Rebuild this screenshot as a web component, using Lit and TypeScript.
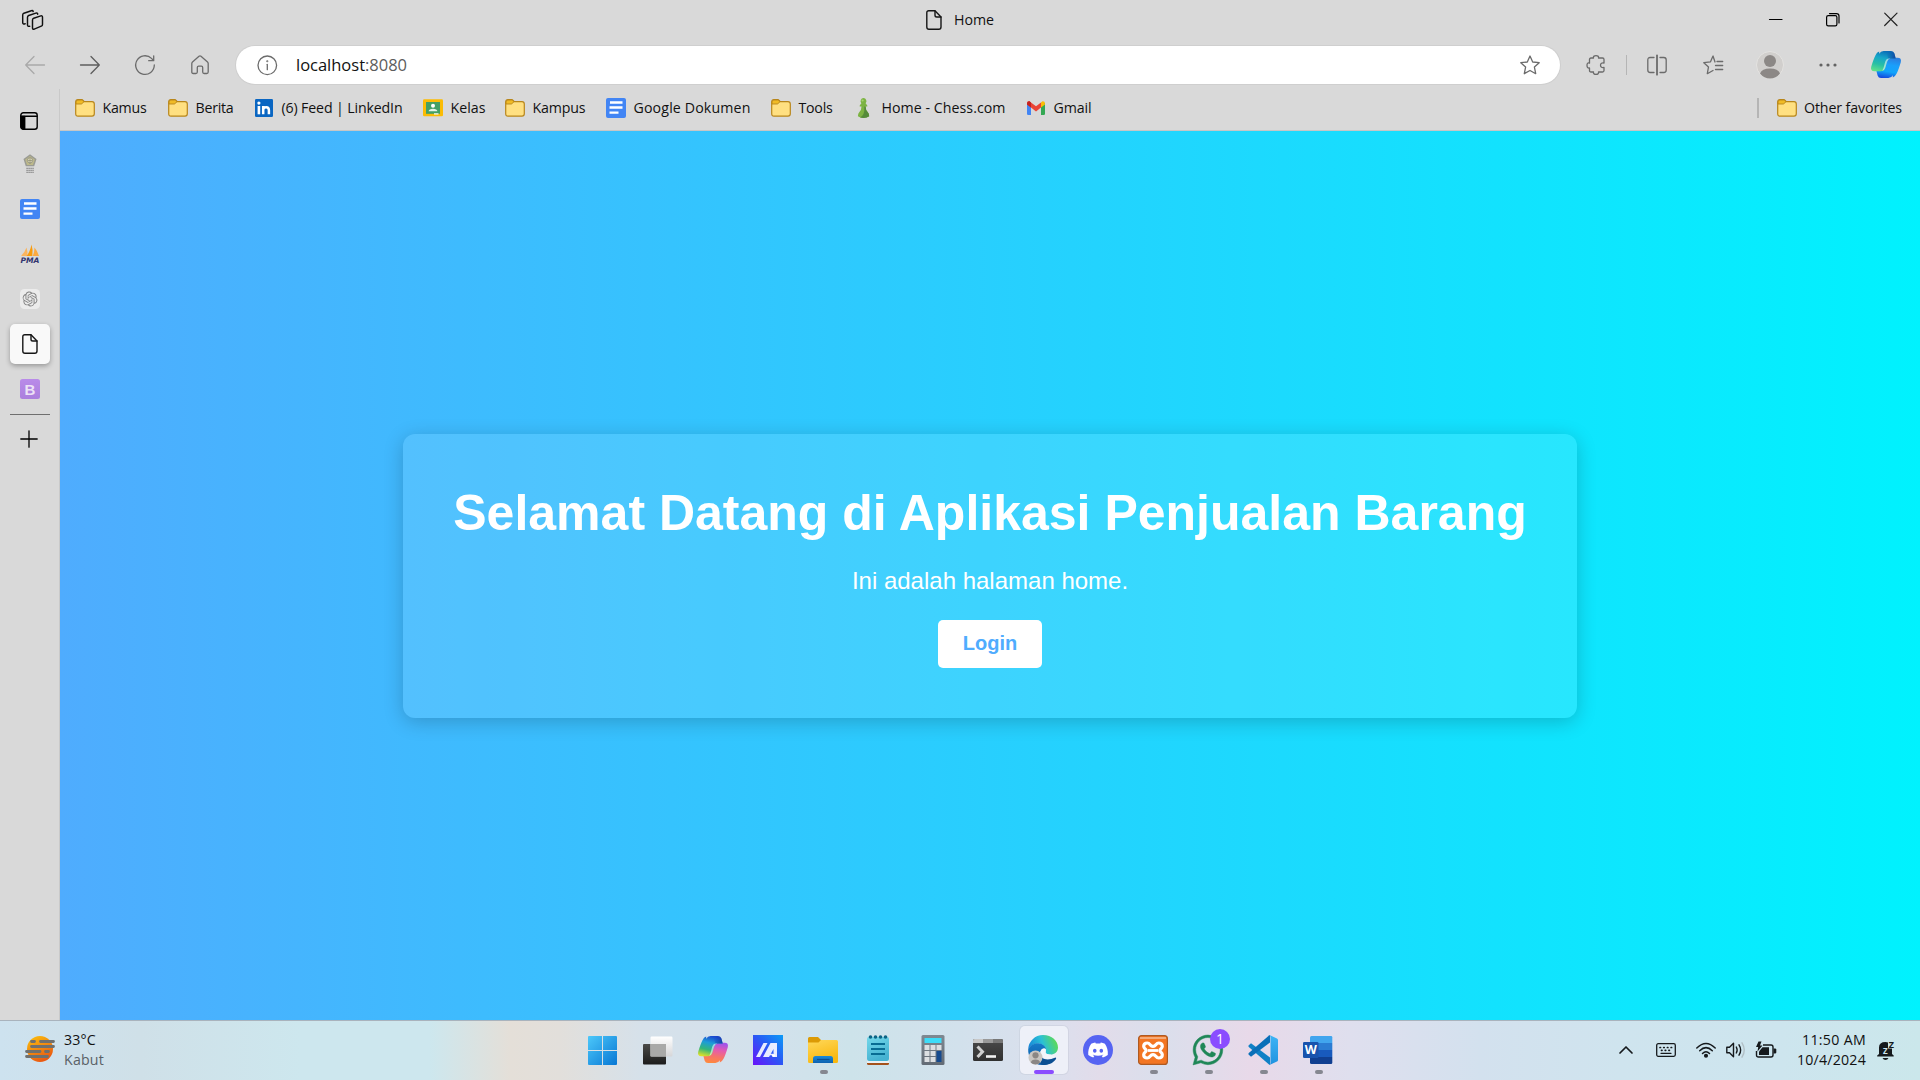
import { LitElement, html, css, svg } from "lit";
import { customElement, property } from "lit/decorators.js";

/** A label whose tracking is adjusted so that it fills the given width. */
@customElement("fit-label")
class FitLabel extends LitElement {
  @property() text = "";
  @property({ type: Number }) w = 0;
  static styles = css`
    :host { display: block; white-space: pre; }
    .t { display: inline-block; }
  `;
  updated() {
    const el = this.renderRoot.querySelector(".t") as HTMLElement;
    if (!this.w || !el) return;
    el.style.letterSpacing = "0";
    const natural = el.getBoundingClientRect().width;
    el.style.letterSpacing = (this.w - natural) / this.text.length + "px";
    this.style.width = this.w + "px";
  }
  render() { return html`<span class="t">${this.text}</span>`; }
}

const box = (w: number, h: number, body: unknown) =>
  html`<svg width=${w} height=${h} viewBox="0 0 ${w} ${h}" fill="none">${body}</svg>`;
const line = (w: number, h: number, body: unknown, color = "#6b6b6b", sw = 1.3) =>
  box(w, h, svg`<g stroke=${color} stroke-width=${sw} stroke-linecap="round" stroke-linejoin="round">${body}</g>`);

const folder = box(20, 20, svg`
  <path d="M.7 5.5V4Q.7 1.7 3 1.7H6.6Q7.6 1.7 8.2 2.5L9.2 3.6H17Q19.3 3.6 19.3 6V15.8Q19.3 18.2 17 18.2H3Q.7 18.2 .7 15.8Z" fill="#ffe081" stroke="#b8861b" stroke-width="1.2"/>
  <path d="M1 6V4Q1 2 3 2H6.6Q7.4 2 8 2.8L8.8 3.8L7.6 5.2Q7 6 6 6Z" fill="#f0bb26" stroke="#b8861b" stroke-width=".9"/>`);
const docs = box(20, 20, svg`
  <rect width="20" height="20" rx="2" fill="#4285f4"/>
  <path d="M4 4.5H16.5M3.5 9.5H16.5M3.5 14.6H12.5" stroke="#fff" stroke-width="2.3"/>`);
const linkedin = box(20, 20, svg`
  <rect x="1" y="1" width="18" height="18" rx="1.2" fill="#0a66c2"/>
  <rect x="3.6" y="8" width="2.6" height="8.3" fill="#fff"/><circle cx="4.9" cy="5.1" r="1.6" fill="#fff"/>
  <path d="M9.2 16.3V8M9.2 11.5Q9.6 9.2 12.2 9.2Q14.9 9.2 14.9 12.2V16.3" stroke="#fff" stroke-width="2.5"/>`);
const classroom = box(20, 20, svg`
  <rect y="1.3" width="20" height="17" rx="1.3" fill="#fbbc04"/>
  <rect x="3" y="4" width="14" height="11.8" fill="#43a066"/>
  <circle cx="10" cy="7.8" r="2" fill="#fff"/><path d="M5.6 13.3Q6 10.8 10 10.8T14.4 13.3Z" fill="#e4f3e8"/>
  <rect x="11" y="15.2" width="4.5" height="1.4" fill="#e9f5ec"/>`);
const chess = box(20, 20, svg`
  <path d="M9.500 0A3.100 3.100 0 0 1 11.600 5.200L13.300 7.600V8.600H11.600Q11.600 12 13.600 14Q15.200 15.500 15.200 18.200Q13 20 9.500 20T3.900 18.200Q3.900 15.500 5.400 14Q7.500 12 7.500 8.600H5.700V7.600L7.400 5.200A3.100 3.100 0 0 1 9.500 0Z" fill="#7cb342"/>
  <path d="M11.600 8.600Q11.600 12 13.600 14Q15.200 15.500 15.200 18.200Q13 20 9.500 20L6 19.500Q11 17.500 10.300 8.600Z" fill="#558b3a"/>
  <circle cx="8.600" cy="2.500" r="1.100" fill="#a6d36f"/>`);
const gmail = box(20, 20, svg`
  <path d="M1 5H5V17H2.300Q1 17 1 15.700Z" fill="#4285f4"/><path d="M15 5H19V15.700Q19 17 17.700 17H15Z" fill="#34a853"/>
  <path d="M1 5.500Q1 3 3.200 3L5 4.400L10 8.300L15 4.400V9.500L10 13.400L5 9.500L1 6.500Z" fill="#ea4335"/>
  <path d="M15 4.400L16.500 3.200Q19 3 19 5.500V6.500L15 9.500Z" fill="#fbbc04"/><path d="M1 5.500Q1 3 3.500 3.200L5 4.400V9.500L1 6.500Z" fill="#c5221f"/>`);

const fileIcon = line(16, 20, svg`<path d="M2.800 .8H9L15 7V17Q15 19.200 12.800 19.200H3Q.8 19.200 .8 17V2.800Q.8 .8 2.800 .8Z"/><path d="M9 1V5.200Q9 7 10.800 7H15"/>`, "#161616", 1.4);
const copilotShape = "M8.200 2.800Q9.600 0 12.600 0H20Q22.600 0 23.400 2.600L24.700 7.500H20.500Q17 7.500 16 11L14.200 17Q13.200 20.200 9.500 20.200H3.400Q-.8 20.200 .2 15.800Q2.500 8 4.500 4.200Q5.700 1.500 8.200 .6Z";
const copilot = (id: string, a: string[], b: string[]) => box(30, 28, svg`
  <defs>
    <linearGradient id="${id}a" x1=".55" y1="0" x2=".25" y2="1">${a.map((c, i) => svg`<stop offset=${i / (a.length - 1)} stop-color=${c} />`)}</linearGradient>
    <linearGradient id="${id}b" x1=".5" y1="1" x2=".7" y2="0">${b.map((c, i) => svg`<stop offset=${i / (b.length - 1)} stop-color=${c} />`)}</linearGradient>
    <linearGradient id="${id}c" x1="0" y1="0" x2="1" y2=".4"><stop offset="0" stop-color=${a[0]} stop-opacity="0"/><stop offset="1" stop-color="#123a9c" stop-opacity=".75"/></linearGradient>
  </defs>
  <path d=${copilotShape} fill="url(#${id}b)" transform="rotate(180 15 13.500)"/>
  <path d=${copilotShape} fill="url(#${id}a)"/>
  <path d="M15 0H20Q22.600 0 23.400 2.600L24.700 7.500H20.500Q18.500 7.500 17.500 8.500Z" fill="url(#${id}c)"/>
  <path d="M19.500 7.600Q17 8 16 11L14.200 17Q13.200 19.500 11.200 19.800L12.500 17L14.200 10.800Q15.200 7.600 18 7.500Z" fill="#fff" opacity=".55"/>`);

const edge = box(30, 30, svg`
  <defs>
    <linearGradient id="e1" x1="0" y1=".6" x2="1" y2=".35"><stop offset="0" stop-color="#1684d8"/><stop offset=".5" stop-color="#2ac0d6"/><stop offset="1" stop-color="#62dc4c"/></linearGradient>
    <linearGradient id="e2" x1="0" y1="0" x2="0" y2="1"><stop offset="0" stop-color="#167bc9"/><stop offset="1" stop-color="#0c59a4"/></linearGradient>
  </defs>
  <path d="M.2 14A15 14.500 0 0 1 15 0C24 0 30 6 30 12.500C30 17 26.500 19.500 22.500 19.500C19 19.500 17 18.300 17.700 16.500C18.600 14.500 17 10 11.500 8.500C6 8 2 11 .2 14Z" fill="url(#e1)"/>
  <path d="M.2 14C2 10.500 6 8 10.500 8.300C15 8.700 18 12 18 14.500C16 12 12 14 12 18.500C12 24 18 27 26 24.500C22 29.500 17 30 14 30C6 30-.5 22 .2 14Z" fill="url(#e2)"/>
  <path d="M12 18C12 24 19 26.500 27.500 22.500Q28.500 22.500 28 24C25 28.500 20 30 15 30C10 28 9 21 12 18Z" fill="#0b4f92"/>
  <path d="M17.700 14C14.500 12.500 12.300 15 12.500 18.500C13 22 17 24.300 22 23.500C25 23 27 22 27.500 21.500Q23 20.500 22.500 19.500C19 19.500 17 18.300 17.700 16.500Z" fill="#f3f5fb"/>
  <circle cx="7.500" cy="22.500" r="7" fill="#c9c6c2"/><circle cx="7.500" cy="20.300" r="3.100" fill="#8b8784"/><path d="M2.800 27.500Q3.500 24.500 7.500 24.500T12.200 27.500Q10.500 29.500 7.500 29.500T2.800 27.500Z" fill="#8b8784"/>`);

const discordPath = "M20.317 4.3698a19.7913 19.7913 0 00-4.8851-1.5152.0741.0741 0 00-.0785.0371c-.211.3753-.4447.8648-.6083 1.2495-1.8447-.2762-3.68-.2762-5.4868 0-.1636-.3933-.4058-.8742-.6177-1.2495a.077.077 0 00-.0785-.037 19.7363 19.7363 0 00-4.8852 1.515.0699.0699 0 00-.0321.0277C.5334 9.0458-.319 13.5799.0992 18.0578a.0824.0824 0 00.0312.0561c2.0528 1.5076 4.0413 2.4228 5.9929 3.0294a.0777.0777 0 00.0842-.0276c.4616-.6304.8731-1.2952 1.226-1.9942a.076.076 0 00-.0416-.1057c-.6528-.2476-1.2743-.5495-1.8722-.8923a.077.077 0 01-.0076-.1277c.1258-.0943.2517-.1923.3718-.2914a.0743.0743 0 01.0776-.0105c3.9278 1.7933 8.18 1.7933 12.0614 0a.0739.0739 0 01.0785.0095c.1202.099.246.1981.3728.2924a.077.077 0 01-.0066.1276 12.2986 12.2986 0 01-1.873.8914.0766.0766 0 00-.0407.1067c.3604.698.7719 1.3628 1.225 1.9932a.076.076 0 00.0842.0286c1.961-.6067 3.9495-1.5219 6.0023-3.0294a.077.077 0 00.0313-.0552c.5004-5.177-.8382-9.6739-3.5485-13.6604a.061.061 0 00-.0312-.0286zM8.02 15.3312c-1.1825 0-2.1569-1.0857-2.1569-2.419 0-1.3332.9555-2.4189 2.157-2.4189 1.2108 0 2.1757 1.0952 2.1568 2.419 0 1.3332-.9555 2.4189-2.1569 2.4189zm7.9748 0c-1.1825 0-2.1569-1.0857-2.1569-2.419 0-1.3332.9554-2.4189 2.1569-2.4189 1.2108 0 2.1757 1.0952 2.1568 2.419 0 1.3332-.946 2.4189-2.1568 2.4189Z";
const whatsappPath = "M13.601 2.326A7.854 7.854 0 0 0 7.994 0C3.627 0 .068 3.558.064 7.926c0 1.399.366 2.76 1.057 3.965L0 16l4.204-1.102a7.933 7.933 0 0 0 3.79.965h.004c4.368 0 7.926-3.558 7.93-7.93A7.898 7.898 0 0 0 13.6 2.326zM7.994 14.521a6.573 6.573 0 0 1-3.356-.92l-.24-.144-2.494.654.666-2.433-.156-.251a6.56 6.56 0 0 1-1.007-3.505c0-3.626 2.957-6.584 6.591-6.584a6.56 6.56 0 0 1 4.66 1.931 6.557 6.557 0 0 1 1.928 4.66c-.004 3.639-2.961 6.592-6.592 6.592zm3.615-4.934c-.197-.099-1.17-.578-1.353-.646-.182-.065-.315-.099-.445.099-.133.197-.513.646-.627.775-.114.133-.232.148-.43.05-.197-.1-.836-.308-1.592-.985-.59-.525-.985-1.175-1.103-1.372-.114-.198-.011-.304.088-.403.087-.088.197-.232.296-.346.1-.114.133-.198.198-.33.065-.134.034-.248-.015-.347-.05-.099-.445-1.076-.612-1.47-.16-.389-.323-.335-.445-.34-.114-.007-.247-.007-.38-.007a.729.729 0 0 0-.529.247c-.182.198-.691.677-.691 1.654 0 .977.71 1.916.81 2.049.098.133 1.394 2.132 3.383 2.992.47.205.84.326 1.129.418.475.152.904.129 1.246.08.38-.058 1.171-.48 1.338-.943.164-.464.164-.86.114-.943-.049-.084-.182-.133-.38-.232z";
const knotPath = "M22.2819 9.8211a5.9847 5.9847 0 0 0-.5157-4.9108 6.0462 6.0462 0 0 0-6.5098-2.9A6.0651 6.0651 0 0 0 4.9807 4.1818a5.9847 5.9847 0 0 0-3.9977 2.9 6.0462 6.0462 0 0 0 .7427 7.0966 5.98 5.98 0 0 0 .511 4.9107 6.051 6.051 0 0 0 6.5146 2.9001A5.9847 5.9847 0 0 0 13.2599 24a6.0557 6.0557 0 0 0 5.7718-4.2058 5.9894 5.9894 0 0 0 3.9977-2.9001 6.0557 6.0557 0 0 0-.7475-7.0729zm-9.022 12.6081a4.4755 4.4755 0 0 1-2.8764-1.0408l.1419-.0804 4.7783-2.7582a.7948.7948 0 0 0 .3927-.6813v-6.7369l2.02 1.1686a.071.071 0 0 1 .038.052v5.5826a4.504 4.504 0 0 1-4.4945 4.4944zm-9.6607-4.1254a4.4708 4.4708 0 0 1-.5346-3.0137l.142.0852 4.783 2.7582a.7712.7712 0 0 0 .7806 0l5.8428-3.3685v2.3324a.0804.0804 0 0 1-.0332.0615L9.74 19.9502a4.4992 4.4992 0 0 1-6.1408-1.6464zM2.3408 7.8956a4.485 4.485 0 0 1 2.3655-1.9728V11.6a.7664.7664 0 0 0 .3879.6765l5.8144 3.3543-2.0201 1.1685a.0757.0757 0 0 1-.071 0l-4.8303-2.7865A4.504 4.504 0 0 1 2.3408 7.872zm16.5963 3.8558L13.1038 8.364 15.1192 7.2a.0757.0757 0 0 1 .071 0l4.8303 2.7913a4.4944 4.4944 0 0 1-.6765 8.1042v-5.6772a.79.79 0 0 0-.407-.667zm2.0107-3.0231l-.142-.0852-4.7735-2.7818a.7759.7759 0 0 0-.7854 0L9.409 9.2297V6.8974a.0662.0662 0 0 1 .0284-.0615l4.8303-2.7866a4.4992 4.4992 0 0 1 6.6802 4.66zM8.3065 12.863l-2.02-1.1638a.0804.0804 0 0 1-.038-.0567V6.0742a4.4992 4.4992 0 0 1 7.3757-3.4537l-.142.0805L8.704 5.459a.7948.7948 0 0 0-.3927.6813zm1.0976-2.3654l2.602-1.4998 2.6069 1.4998v2.9994l-2.5974 1.4997-2.6067-1.4997Z";
const grad = (id: string, c1: string, c2: string, x2 = 0, y2 = 1) =>
  svg`<linearGradient id=${id} x1="0" y1="0" x2=${x2} y2=${y2}><stop offset="0" stop-color=${c1} /><stop offset="1" stop-color=${c2} /></linearGradient>`;

const sideIcons = [
  box(20, 20, svg`
    <path d="M10 .300L16.500 5L14.200 12.300H5.800L3.500 5Z" fill="#9a9b94"/><path d="M10 2L14.800 5.500L13 11H7L5.200 5.500Z" fill="#bdb98a"/>
    <circle cx="10" cy="6.300" r="2.600" fill="#dedbb8" stroke="#84847c" stroke-width=".7"/><path d="M10 4V10M8 6.500H12" stroke="#8b8b70" stroke-width=".7"/>
    <path d="M6.300 14.400H13.800M6.300 16.400H13.800M6.300 18.400H13.800" stroke="#949494" stroke-width="1.300" stroke-dasharray="1.600 .4"/>`),
  docs,
  box(20, 20, svg`
    <path d="M1 12Q4.500 9 6.500 3.500Q8 8 7.300 12Z" fill="#fbb55e"/><path d="M6.500 12Q10 8 11.500 .5Q13.300 6 12.300 12Z" fill="#f89c0e"/><path d="M12.800 12Q14.500 8 14.500 3.500Q17.500 7 19 12Z" fill="#fbaa40"/>
    <text x="10" y="19" text-anchor="middle" textLength="19" lengthAdjust="spacingAndGlyphs" class="pma">PMA</text>`),
  box(20, 20, svg`<rect width="20" height="20" rx="4.500" fill="#ececec"/><g transform="translate(2.500 2.500) scale(.625)"><path d=${knotPath} fill="#848484"/></g>`),
  fileIcon,
  box(20, 20, svg`<defs>${grad("bb", "#b98be9", "#ab7fdd")}</defs><rect width="20" height="20" rx="2.500" fill="url(#bb)"/><text x="10" y="15.500" text-anchor="middle" class="bb">B</text>`),
];

interface Fav { icon: unknown; text: string; w: number; gap: number; }
const favs: Fav[] = [
  { icon: folder, text: "Kamus", w: 44, gap: 21 },
  { icon: folder, text: "Berita", w: 38, gap: 20 },
  { icon: linkedin, text: "(6) Feed | LinkedIn", w: 121, gap: 20 },
  { icon: classroom, text: "Kelas", w: 35, gap: 19 },
  { icon: folder, text: "Kampus", w: 53, gap: 20 },
  { icon: docs, text: "Google Dokumen", w: 117, gap: 20 },
  { icon: folder, text: "Tools", w: 34, gap: 21 },
  { icon: chess, text: "Home - Chess.com", w: 124, gap: 20 },
  { icon: gmail, text: "Gmail", w: 38, gap: 0 },
];

interface App { icon: unknown; run?: boolean; active?: boolean; badge?: string; }
const apps: App[] = [
  { icon: box(30, 30, svg`<defs>${grad("w1", "#4cc8fa", "#0877d4", 1, 1)}</defs><path d="M0 2Q0 1 1 1H14V15H0ZM15 1H28Q29 1 29 2V15H15ZM0 16H14V30H1Q0 30 0 29ZM15 16H29V29Q29 30 28 30H15Z" fill="url(#w1)"/>`) },
  { icon: box(30, 30, svg`<defs>${grad("tv", "#4a4a48", "#1c1c1c")}${grad("tw", "#ffffff", "#d6d6d8")}</defs><rect x="0" y="9" width="23" height="20.500" rx="1" fill="url(#tv)"/><rect x="7.500" y="1.500" width="22" height="20" rx="1.200" fill="url(#tw)"/><rect x="7.500" y="9" width="15.500" height="12.500" fill="#a9a9a8"/>`) },
  { icon: copilot("cb", ["#1b48cf", "#1d9cd8", "#33b67a", "#dce02a"], ["#a255e8", "#e45bb0", "#f6746a", "#ff8a3c"]) },
  { icon: box(30, 30, svg`<defs><linearGradient id="as" x1="0" y1="1" x2="1" y2="0"><stop offset="0" stop-color="#6a12fa"/><stop offset=".55" stop-color="#285cf5"/><stop offset="1" stop-color="#0b9bf6"/></linearGradient></defs><rect width="30" height="30" fill="url(#as)"/><path d="M3 22L10.500 8H14.500L7 22ZM10 22L17.500 8H24V22H20.500V14L16 22Z" fill="#e8ecff"/><path d="M16.500 19.500H20" stroke="#e8ecff" stroke-width="1.500"/><circle cx="20.500" cy="20.500" r="1.600" fill="#fff"/>`) },
  { run: true, icon: box(30, 30, svg`<defs>${grad("fo", "#ffd85a", "#f9b80f", .4, 1)}${grad("fp", "#1a8ad8", "#0f62b0")}</defs><path d="M0 3.500Q0 2 1.500 2H10L13 5H20V12H0Z" fill="#dc9a05"/><path d="M0 7.500H10.500L13 5H28.500Q30 5 30 6.500V26.500Q30 28 28.500 28H1.500Q0 28 0 26.500Z" fill="url(#fo)"/><path d="M5 28V23.500Q5 21 7.500 21H22.500Q25 21 25 23.500V28Z" fill="url(#fp)"/><path d="M9 24.500H21.500" stroke="#0b4f93" stroke-width="1.200"/>`) },
  { icon: box(30, 30, svg`<defs>${grad("np", "#74d8ea", "#45b2d2", .4, 1)}</defs><rect x="4" y="25" width="22" height="5" rx="1.500" fill="#a4521c"/><rect x="4" y="23" width="22" height="5" fill="#e8f0f4"/><path d="M4 4Q4 2 6 2H24Q26 2 26 4V24Q26 26 24 26H6Q4 26 4 24Z" fill="url(#np)"/><path d="M8 9H22M8 14H22M8 19H22" stroke="#086c93" stroke-width="1.900"/><g fill="#0c6485"><circle cx="7.500" cy="2" r="1.800"/><circle cx="12.500" cy="2" r="1.800"/><circle cx="17.500" cy="2" r="1.800"/><circle cx="22.500" cy="2" r="1.800"/></g>`) },
  { icon: box(30, 30, svg`<defs>${grad("calc", "#7f8992", "#626b75")}</defs><rect x="3.500" width="23" height="30" rx="1.500" fill="url(#calc)"/><rect x="6.500" y="3" width="17" height="5" fill="#3ddcf8"/><path d="M6.500 10H11.500V15H6.500ZM12.500 10H17.500V15H12.500ZM18.500 10H23.500V15H18.500ZM6.500 16H11.500V21H6.500ZM12.500 16H17.500V21H12.500ZM6.500 22H11.500V27H6.500ZM12.500 22H17.500V27H12.500Z" fill="#dcdfe2"/><rect x="18.500" y="16" width="5" height="11" fill="#164a8e"/>`) },
  { icon: box(30, 30, svg`<defs>${grad("te", "#4a4a4a", "#303030")}</defs><rect y="4" width="30" height="22" rx="1.500" fill="url(#te)"/><path d="M1.500 4H10V8H0V5.500Q0 4 1.500 4Z" fill="#c8c8c8"/><path d="M10 4H20V8H10Z" fill="#999"/><path d="M20 4H28.500Q30 4 30 5.500V8H20Z" fill="#777"/><path d="M4.500 11.500L9.500 16.700L4.500 22" stroke="#cfcfcf" stroke-width="3"/><path d="M13 21.500H23" stroke="#f1f1f1" stroke-width="2.600"/>`) },
  { run: true, active: true, icon: edge },
  { icon: box(30, 30, svg`<circle cx="15" cy="15" r="15" fill="#5664f2"/><g transform="translate(5.200 5.200) scale(.82)"><path d=${discordPath} fill="#fff"/></g>`) },
  { run: true, icon: box(30, 30, svg`<rect x=".6" y=".6" width="28.800" height="28.800" rx="3" fill="#f37623" stroke="#ae5a22" stroke-width="1.200"/><path d="M2 3H28" stroke="#f4b184" stroke-width="1.800"/><path d="M9.300 8C12.300 8 12 11.300 15 11.300S17.700 8 20.700 8Q24.300 8 24.300 11.300C24.300 13.800 21.800 14 21.800 15.500S24.300 17.500 24.300 19.800Q24.300 23 20.700 23C17.700 23 18 19.700 15 19.700S12.300 23 9.300 23Q5.700 23 5.700 19.800C5.700 17.500 8.200 17 8.200 15.500S5.700 13.800 5.700 11.300Q5.700 8 9.300 8Z" stroke="#fff" stroke-width="3.200"/><path d="M10 15.500H20" stroke="#fff" stroke-width="2.800"/>`) },
  { run: true, badge: "1", icon: box(30, 30, svg`<g transform="scale(1.870)"><path d=${whatsappPath} fill="#1f8757" stroke="#1f8757" stroke-width=".25"/></g>`) },
  { run: true, icon: box(30, 30, svg`<defs>${grad("vs", "#3db4f5", "#1f93e0")}</defs><path d="M.5 10.500L3 8.300L22 22.500V30L21 29.500L.5 11.800Z" fill="#1081c6"/><path d="M.5 19.500L3 21.700L22 7.500V0L21 .5L.5 18.200Z" fill="#0a6fb8"/><path d="M21.500 0L29 3.500Q30 4 30 5V25Q30 26 29 26.500L21.500 30Q22.500 29 22.500 27.500V2.500Q22.500 1 21.500 0Z" fill="url(#vs)"/>`) },
  { run: true, icon: box(30, 30, svg`<path d="M8.500 1H28Q29.300 1 29.300 2.300V8H7V2.500Q7 1 8.500 1Z" fill="#41a5ee"/><path d="M7 8H29.300V15H7Z" fill="#2b7cd3"/><path d="M7 15H29.300V22H7Z" fill="#185abd"/><path d="M7 22H29.300V27.700Q29.300 29 28 29H8.500Q7 29 7 27.500Z" fill="#103f91"/><rect x="0" y="7" width="15.500" height="16" rx="1.300" fill="#1853ad"/><text x="7.700" y="19.200" text-anchor="middle" class="ww">W</text>`) },
];

const star = "M10 1L12.700 7L19.200 7.700L14.400 12.100L15.700 18.700L10 15.500L4.300 18.700L5.600 12.100L.8 7.700L7.300 7Z";

@customElement("app-root")
class AppRoot extends LitElement {
  static styles = css`
    :host { display: block; }
    * { box-sizing: border-box; }
    svg { display: block; flex: none; overflow: visible; }
    .screen { width: 1920px; height: 1080px; overflow: hidden; display: flex; flex-direction: column; background: #d9d9d9; font: 14.2px/20px "Open Sans", "Noto Sans", sans-serif; color: #111; }
    .title { height: 40px; display: grid; grid-template-columns: 22px 21px 883px 16px 12px 1fr 14px 43px 14px 44px 14px 22px; align-items: center; }
    .title > :nth-child(1) { grid-column: 2; }
    .title > :nth-child(2) { grid-column: 4; }
    .title > :nth-child(3) { grid-column: 6; }
    .title > :nth-child(4) { grid-column: 7; }
    .title > :nth-child(5) { grid-column: 9; }
    .title > :nth-child(6) { grid-column: 11; }
    .tools { height: 49px; display: flex; align-items: center; padding: 0 19px 0 25px; }
    .nav { display: flex; gap: 35px; }
    .addr { flex: 1; height: 38px; margin: 0 26px; border-radius: 19px; background: #fff; box-shadow: 0 0 0 1px #cfcfcf; display: flex; align-items: center; padding: 0 20px 0 21px; }
    .url { flex: 1; margin-left: 19px; font-size: 16.500px; display: flex; padding-top: 1px; }
    .port { color: #5c5c5c; }
    .right { display: flex; align-items: center; }
    .sep { width: 1.500px; height: 20px; background: #b5b5b5; }
    .r1 { margin: 0 20px; } .r2 { margin-left: 36px; } .r3 { margin: 0 34px 0 33px; } .r4 { margin-left: 33px; }
    .body { flex: 1; display: flex; min-height: 0; }
    .side { width: 60px; border-right: 1px solid #c9c9c9; display: flex; flex-direction: column; align-items: center; padding-top: 12px; }
    .cell { width: 59px; height: 45px; display: grid; place-items: center; padding-left: 1px; }
    .first { height: 40px; padding: 0 1px 0 0; }
    .tile { width: 40px; height: 40px; border-radius: 5px; background: #f9f9f9; box-shadow: 0 2px 5px rgba(0,0,0,.3); display: grid; place-items: center; }
    .rule { width: 40px; height: 1px; background: #6f6f6f; margin-top: 3px; }
    .plus { height: 48px; padding: 0 1px 0 0; }
    .main { flex: 1; display: flex; flex-direction: column; }
    .favs { height: 42px; display: flex; align-items: center; padding: 0 18px 4px 15px; border-bottom: 1px solid #c6c6c6; }
    .fav { display: flex; align-items: center; gap: 8px; }
    .fav fit-label { margin-left: -.5px; }
    .other { margin-left: auto; display: flex; align-items: center; gap: 18px; }
    .page { flex: 1; background: linear-gradient(90deg, #4facfe, #00f2fe); display: grid; place-items: center; font-family: "Liberation Sans", Arial, sans-serif; }
    .card { height: 284px; padding: 50px; border-radius: 12px; background: rgba(255,255,255,.1); box-shadow: 0 4px 20px rgba(0,0,0,.2); display: flex; flex-direction: column; align-items: center; color: #fff; }
    h1 { margin: 0 0 25px; font-size: 50px; line-height: 58px; font-weight: 700; white-space: nowrap; }
    p { margin: 0 0 25px; font-size: 24px; line-height: 28px; }
    .login { height: 48px; padding: 12px 25px 0; border-radius: 5px; background: #fff; color: #4facfe; font-size: 20px; line-height: 23px; font-weight: 700; }
    .bar { height: 60px; border-top: 1px solid #a9b3bd; display: grid; grid-template-columns: 576px 1fr auto; background: linear-gradient(90deg, #cde2ef 0, #cfe0e8 140px, #cde7ee 300px, #cde7ee 430px, #e4dfd8 510px, #e2dfdb 560px, #d6e1ea 640px, #d3e1ec 760px, #cde3ea 850px, #d2e1ec 960px, #dcdfed 1060px, #e2dcea 1100px, #dadfec 1160px, #e8d9e9 1250px, #dfdfee 1350px, #d3e1ee 1480px, #cfe4ee 1620px, #cde5ee 1780px, #cbe7eb 1920px); }
    .weather { display: flex; padding: 0 0 0 25px; gap: 9px; }
    .weather svg { margin-top: 14px; }
    .two { display: flex; flex-direction: column; padding-top: 9px; }
    .dim { color: #5a6167; }
    .apps { display: flex; }
    .app { width: 55px; display: grid; place-items: center; position: relative; padding: 0 1px 1px 0; }
    .app.active::before { content: ""; position: absolute; left: 3.500px; top: 5px; width: 48px; height: 48px; border-radius: 5px; background: #eef0f8; box-shadow: 0 0 0 1px rgba(190,195,210,.35); }
    .app svg { position: relative; }
    .dot { position: absolute; bottom: 6px; left: 24px; width: 8px; height: 4px; border-radius: 2px; background: #858790; }
    .active .dot { width: 20px; left: 18px; background: #8a4dff; }
    .badge { position: absolute; left: 29px; top: 8px; width: 20px; height: 20px; border-radius: 50%; background: #8a4dff; color: #fff; text-align: center; font-size: 14px; line-height: 19px; }
    .tray { display: grid; grid-template-columns: 14px 23px 20px 20px 20px 10px 20px 9px 22px 20px 69px 11px 18px 25px; align-items: center; padding-bottom: 1px; }
    .tray > :nth-child(1) { grid-column: 1; } .tray > :nth-child(2) { grid-column: 3; }
    .tray > :nth-child(3) { grid-column: 5; } .tray > :nth-child(4) { grid-column: 7; }
    .tray > :nth-child(5) { grid-column: 9; } .tray > :nth-child(7) { grid-column: 13; }
    .clock { grid-column: 11; display: flex; flex-direction: column; align-items: flex-end; align-self: start; padding-top: 9px; }
    .pma { font: italic bold 7.500px "DejaVu Sans", sans-serif; fill: #33366f; }
    .bb { font: 600 15px "Liberation Sans", sans-serif; fill: #ece2f6; }
    .ww { font: bold 12.500px "Open Sans", sans-serif; fill: #fff; }
    .zz { font: bold 9px "Open Sans", sans-serif; fill: #161a1d; }
    .zi { font: bold 8px "Open Sans", sans-serif; fill: #cfe6ee; }
  `;

  private titleBar() {
    return html`<header class="title">
      ${line(21, 20, svg`<path d="M10.500 10Q10.500 8.700 11.700 8.300L18.800 5.900Q20.500 5.500 20.500 7.200V14.400Q20.500 15.700 19.300 16.200L12.200 19.200Q10.500 19.600 10.500 18Z"/><path d="M7.700 16.300Q5.500 16.700 5.500 15V7.300Q5.500 6 6.700 5.500L13.800 3.100Q15.500 2.700 15.700 4.200"/><path d="M3.200 13.800Q.7 14.500 .7 12.500V5Q.7 3.800 1.900 3.200L9.300 .700Q10.900 .3 11.200 1.500"/>`, "#111", 1.450)}
      ${fileIcon}
      <fit-label text="Home" w="40"></fit-label>
      ${line(14, 14, svg`<path d="M.5 6.500H13"/>`, "#000", 1.200)}
      ${line(14, 14, svg`<rect x=".6" y="2.600" width="10.300" height="10.300" rx="1.600"/><path d="M3.500 .6H10.500Q13 .6 13 3V10"/>`, "#000", 1.200)}
      ${line(14, 14, svg`<path d="M.7 .2L13 12.500M13 .2L.7 12.500"/>`, "#222", 1.200)}
    </header>`;
  }

  private toolBar() {
    return html`<nav class="tools">
      <div class="nav">
        ${line(20, 20, svg`<path d="M19.500 10H.7M9 1.500L.7 10L9 18.500"/>`, "#a9a9a9")}
        ${line(20, 20, svg`<path d="M.5 10H19.300M11 1.500L19.300 10L11 18.500"/>`, "#5e5e5e")}
        ${line(20, 20, svg`<path d="M19.300 10A9.300 9.300 0 1 1 16.500 3.400L18.500 5.500M18.700 .8V5.700H13.700"/>`)}
        ${line(20, 20, svg`<path d="M1.800 8.500Q1.800 7.500 2.500 6.900L9 1.300Q10 .5 11 1.300L17.500 6.900Q18.200 7.500 18.200 8.500V17Q18.200 18.500 16.700 18.500H14.200Q12.700 18.500 12.700 17V12.500Q12.700 11.200 11.400 11.200H8.600Q7.300 11.200 7.300 12.500V17Q7.300 18.500 5.800 18.500H3.300Q1.800 18.500 1.800 17Z"/>`)}
      </div>
      <div class="addr">
        ${line(20, 20, svg`<circle cx="10.300" cy="10.300" r="9.300"/><path d="M10.300 9.300V14.700"/><circle cx="10.300" cy="6.200" r=".4"/>`)}
        <div class="url"><fit-label text="localhost" w="69"></fit-label><fit-label class="port" text=":8080" w="42"></fit-label></div>
        ${line(20, 20, svg`<path d=${star} />`)}
      </div>
      <div class="right">
        ${line(20, 20, svg`<path d="M3.500 4.500Q3.500 3 5 3H7.500C7 1 8.500 .7 10 .7S13 1 12.500 3H16.500Q18 3 18 4.500V8C16 7.500 14.500 8.500 14.500 10.300S16 13 18 12.500V15.500Q18 17 16.500 17H12.500C13 19 11.500 19.300 10 19.300S7 19 7.500 17H5Q3.500 17 3.500 15.500V13C1.500 13.300 1 12 1 10.300S1.500 7.500 3.500 8Z"/>`)}
        <div class="sep r1"></div>
        ${line(20, 20, svg`<path d="M10 .3V19.700" stroke-width="1.800"/><path d="M7 2.500H3.200Q.8 2.500 .8 5V15Q.8 17.500 3.200 17.500H7M13 2.500H16.800Q19.200 2.500 19.200 5V15Q19.200 17.500 16.800 17.500H13"/>`)}
        <div class="r2">${line(20, 20, svg`<path d="M12 7L10 1L7.500 6.800L.8 7.700L5.500 11.900L4.300 18.700L10 15.500M14 6.500H19.700M12.500 10.500H19.700M12.500 14.500H19.700"/>`)}</div>
        <div class="r3">${box(28, 28, svg`<circle cx="14" cy="14" r="13.500" fill="#d1cfcd" stroke="#e4e3e1"/><circle cx="14" cy="10" r="6" fill="#8c8886"/><path d="M4 22.500Q6 17.500 14 17.500T24 22.500Q20 27.500 14 27.500T4 22.500Z" fill="#8c8886"/>`)}</div>
        ${box(20, 20, svg`<g fill="#636363"><circle cx="3" cy="10" r="1.600"/><circle cx="10" cy="10" r="1.600"/><circle cx="17" cy="10" r="1.600"/></g>`)}
        <div class="r4">${copilot("ct", ["#0a6fb8", "#16a6c9", "#28bfa5", "#5fe08a"], ["#2b7fe0", "#1a9ffb", "#12a4fb", "#1548dc"])}</div>
      </div>
    </nav>`;
  }

  private sideBar() {
    return html`<aside class="side">
      <div class="cell first">${line(18, 18, svg`<rect x=".8" y=".8" width="16.400" height="16.400" rx="2.500"/><path d="M1 4.300H17"/><path d="M1 4.300H5V17.200H3Q.8 17 .8 15Z" fill="#000" stroke-width=".8"/>`, "#000", 1.400)}</div>
      ${sideIcons.map((ic, i) => html`<div class="cell">${i === 4 ? html`<div class="tile">${ic}</div>` : ic}</div>`)}
      <div class="rule"></div>
      <div class="cell plus">${line(18, 18, svg`<path d="M.8 9H17.200M9 .8V17.200"/>`, "#000", 1.300)}</div>
    </aside>`;
  }

  private taskBar() {
    const ink = "#161a1d";
    return html`<footer class="bar">
      <div class="weather">
        ${box(30, 28, svg`<defs>${grad("sun", "#fcc50c", "#ea5a12", .5, 1)}</defs><circle cx="15" cy="14" r="13" fill="url(#sun)"/><path d="M6.500 6.500H9.500M15.500 6.500H28.500M6.500 11.500H28.500M1.500 16.500H15M20.500 16.500H23.500M1.500 21.500H22.500" stroke="#70706e" stroke-width="2.800" stroke-linecap="round"/>`)}
        <div class="two"><fit-label text="33°C" w="32"></fit-label><fit-label class="dim" text="Kabut" w="40"></fit-label></div>
      </div>
      <div class="apps">${apps.map(a => html`<div class="app ${a.active ? "active" : ""}">${a.icon}${a.run ? html`<i class="dot"></i>` : ""}${a.badge ? html`<span class="badge">${a.badge}</span>` : ""}</div>`)}</div>
      <div class="tray">
        ${line(14, 8, svg`<path d="M1 7L7 1L13 7"/>`, ink, 1.700)}
        ${line(20, 14, svg`<rect x=".7" y=".7" width="18.600" height="12.600" rx="1.500"/><path d="M4 4.500H16.500" stroke-dasharray=".5 3.200" stroke-width="1.700"/><path d="M5.500 7.300H15" stroke-dasharray=".5 3.200" stroke-width="1.700"/><path d="M5 10.300H15"/>`, ink, 1.300)}
        ${line(20, 16, svg`<path d="M.8 6Q10-3 19.200 6M3.700 8.800Q10 2.500 16.300 8.800M6.500 11.500Q10 8 13.500 11.500"/><circle cx="10" cy="13.800" r="1.300" fill=${ink} />`, ink, 1.500)}
        ${line(20, 16, svg`<path d="M.8 5.200H3.500L7.500 1.200V14.800L3.500 10.800H.8Z"/><path d="M10.300 5Q12 8 10.300 11M13 2.800Q16.300 8 13 13.200"/><path d="M16 .8Q20.500 8 16 15.200" stroke="#b2bfc5"/>`, ink, 1.400)}
        ${box(22, 18, svg`<path d="M8 4H16Q18 4 18 6V14Q18 16 16 16H3.500Q1.500 16 1.500 14V10" stroke=${ink} stroke-width="1.400"/><path d="M7.500 6.200H14V14H4V10.500Z" fill=${ink} /><path d="M18.500 7.500H20Q21.300 7.500 21.300 8.500V11.500Q21.300 12.500 20 12.500H18.500Z" fill=${ink} /><path d="M3.500 .5L1 6H3.200L2.500 10.500L7.500 4.500H5L6.500 .5Z" fill=${ink} />`)}
        <div class="clock"><fit-label text="11:50 AM" w="64"></fit-label><fit-label text="10/4/2024" w="69"></fit-label></div>
        ${box(18, 20, svg`<path d="M2 14V7.500Q2 2 8.500 2Q10 2 11 2.500V8.500H15V14L16.700 15.500V16.500H.2V15.500Z" fill=${ink} /><path d="M5.500 18H11.500Q10.500 20 8.500 20T5.500 18Z" fill=${ink} /><text x="6" y="14" class="zi">Z</text><text x="11.800" y="8" class="zz">Z</text>`)}
      </div>
    </footer>`;
  }

  render() {
    return html`<div class="screen">
      ${this.titleBar()}
      ${this.toolBar()}
      <div class="body">
        ${this.sideBar()}
        <div class="main">
          <div class="favs">
            ${favs.map(f => html`<div class="fav" style="margin-right:${f.gap + 0.5}px">${f.icon}<fit-label text=${f.text} w=${f.w}></fit-label></div>`)}
            <div class="other"><div class="sep"></div><div class="fav">${folder}<fit-label text="Other favorites" w="98"></fit-label></div></div>
          </div>
          <main class="page">
            <section class="card">
              <h1>Selamat Datang di Aplikasi Penjualan Barang</h1>
              <p>Ini adalah halaman home.</p>
              <div class="login">Login</div>
            </section>
          </main>
        </div>
      </div>
      ${this.taskBar()}
    </div>`;
  }
}
